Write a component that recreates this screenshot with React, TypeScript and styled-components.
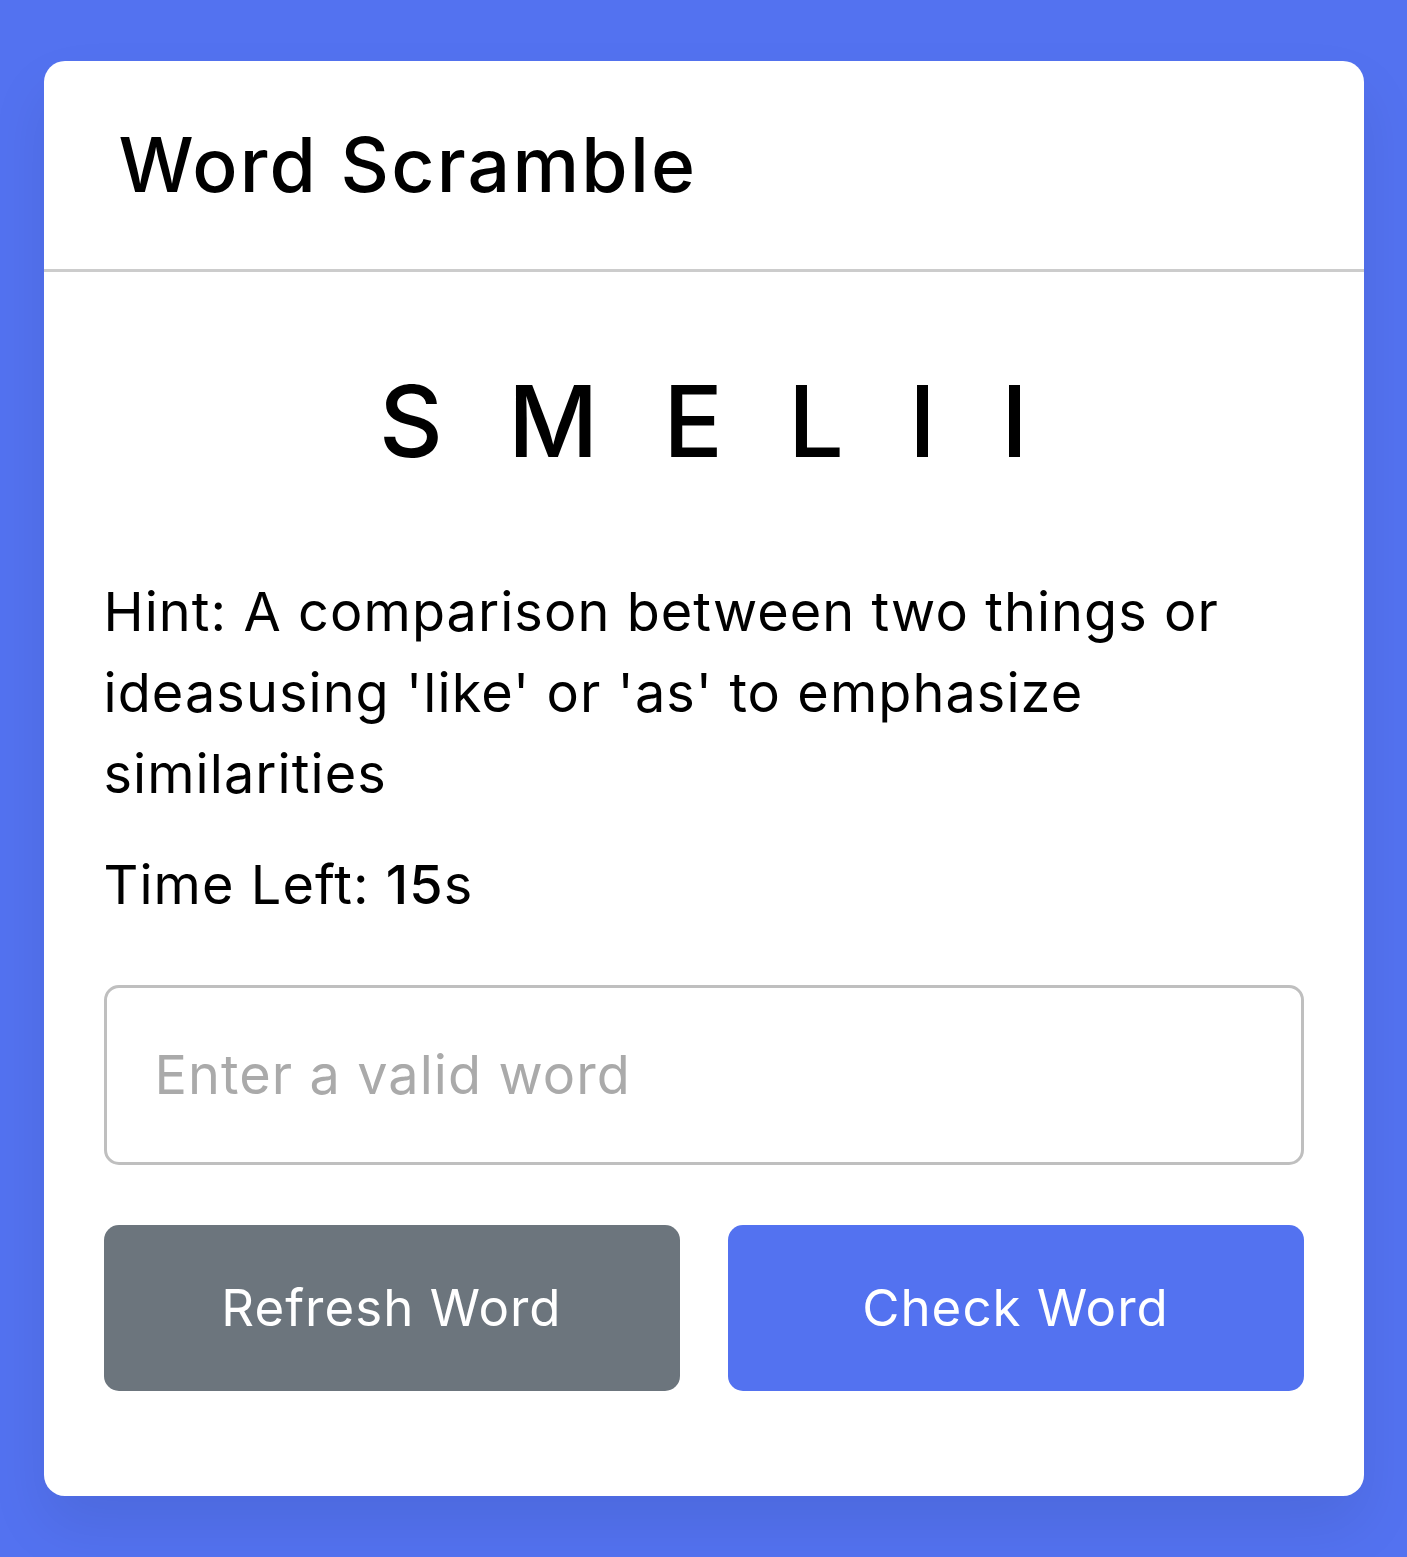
import React from 'react';
import styled, { createGlobalStyle } from 'styled-components';

const GlobalStyle = createGlobalStyle`
  * {
    margin: 0;
    padding: 0;
    box-sizing: border-box;
    font-family: Inter, "Open Sans", sans-serif;
  }
  body {
    background: #5372f0;
  }
`;

const Page = styled.div`
  display: flex;
  padding: 0 30px;
  min-height: 100vh;
  align-items: center;
  justify-content: center;
`;

const Card = styled.div`
  width: 1320px;
  border-radius: 21px;
  background: #fff;
  box-shadow: 0 30px 60px rgba(0, 0, 0, 0.08);
`;

const Title = styled.h2`
  font-size: 75px;
  font-weight: 500;
  line-height: 1.5;
  letter-spacing: 0.03em;
  padding: 48px 75px;
  border-bottom: 3px solid #ccc;
  color: #000;
`;

const Content = styled.div`
  margin: 75px 60px 105px;
`;

const Scrambled = styled.p`
  user-select: none;
  font-size: 99px;
  font-weight: 500;
  line-height: 1.5;
  text-align: center;
  letter-spacing: 65px;
  margin-right: -65px;
  word-break: break-all;
  text-transform: uppercase;
  color: #000;
`;

const Details = styled.div`
  margin: 75px 0 60px;
`;

const Detail = styled.p`
  font-size: 54px;
  line-height: 1.5;
  letter-spacing: 0.02em;
  color: #000;
  margin-bottom: 30px;

  &:last-child {
    margin-bottom: 0;
  }

  b {
    font-weight: 500;
  }
`;

const GuessInput = styled.input`
  width: 100%;
  height: 180px;
  outline: none;
  padding: 0 48px;
  font-size: 54px;
  letter-spacing: 0.02em;
  border-radius: 15px;
  border: 3px solid #bfbfbf;
  color: #000;

  &::placeholder {
    color: #aaa;
  }
`;

const Buttons = styled.div`
  display: flex;
  margin-top: 60px;
  justify-content: space-between;
`;

const Button = styled.button<{ $primary?: boolean }>`
  border: none;
  outline: none;
  color: #fff;
  cursor: pointer;
  padding: 45px 0;
  font-size: 51px;
  line-height: 1.5;
  letter-spacing: 0.02em;
  border-radius: 15px;
  width: calc(100% / 2 - 24px);
  background: ${({ $primary }) => ($primary ? '#5372f0' : '#6c757d')};
`;

export default function App() {
  return (
    <>
      <GlobalStyle />
      <Page>
        <Card>
          <Title>Word Scramble</Title>
          <Content>
            <Scrambled>smelii</Scrambled>
            <Details>
              <Detail>Hint: A comparison between two things or ideasusing 'like' or 'as' to emphasize similarities</Detail>
              <Detail>
                Time Left: <b>15</b>s
              </Detail>
            </Details>
            <GuessInput type="text" placeholder="Enter a valid word" spellCheck={false} />
            <Buttons>
              <Button>Refresh Word</Button>
              <Button $primary>Check Word</Button>
            </Buttons>
          </Content>
        </Card>
      </Page>
    </>
  );
}
